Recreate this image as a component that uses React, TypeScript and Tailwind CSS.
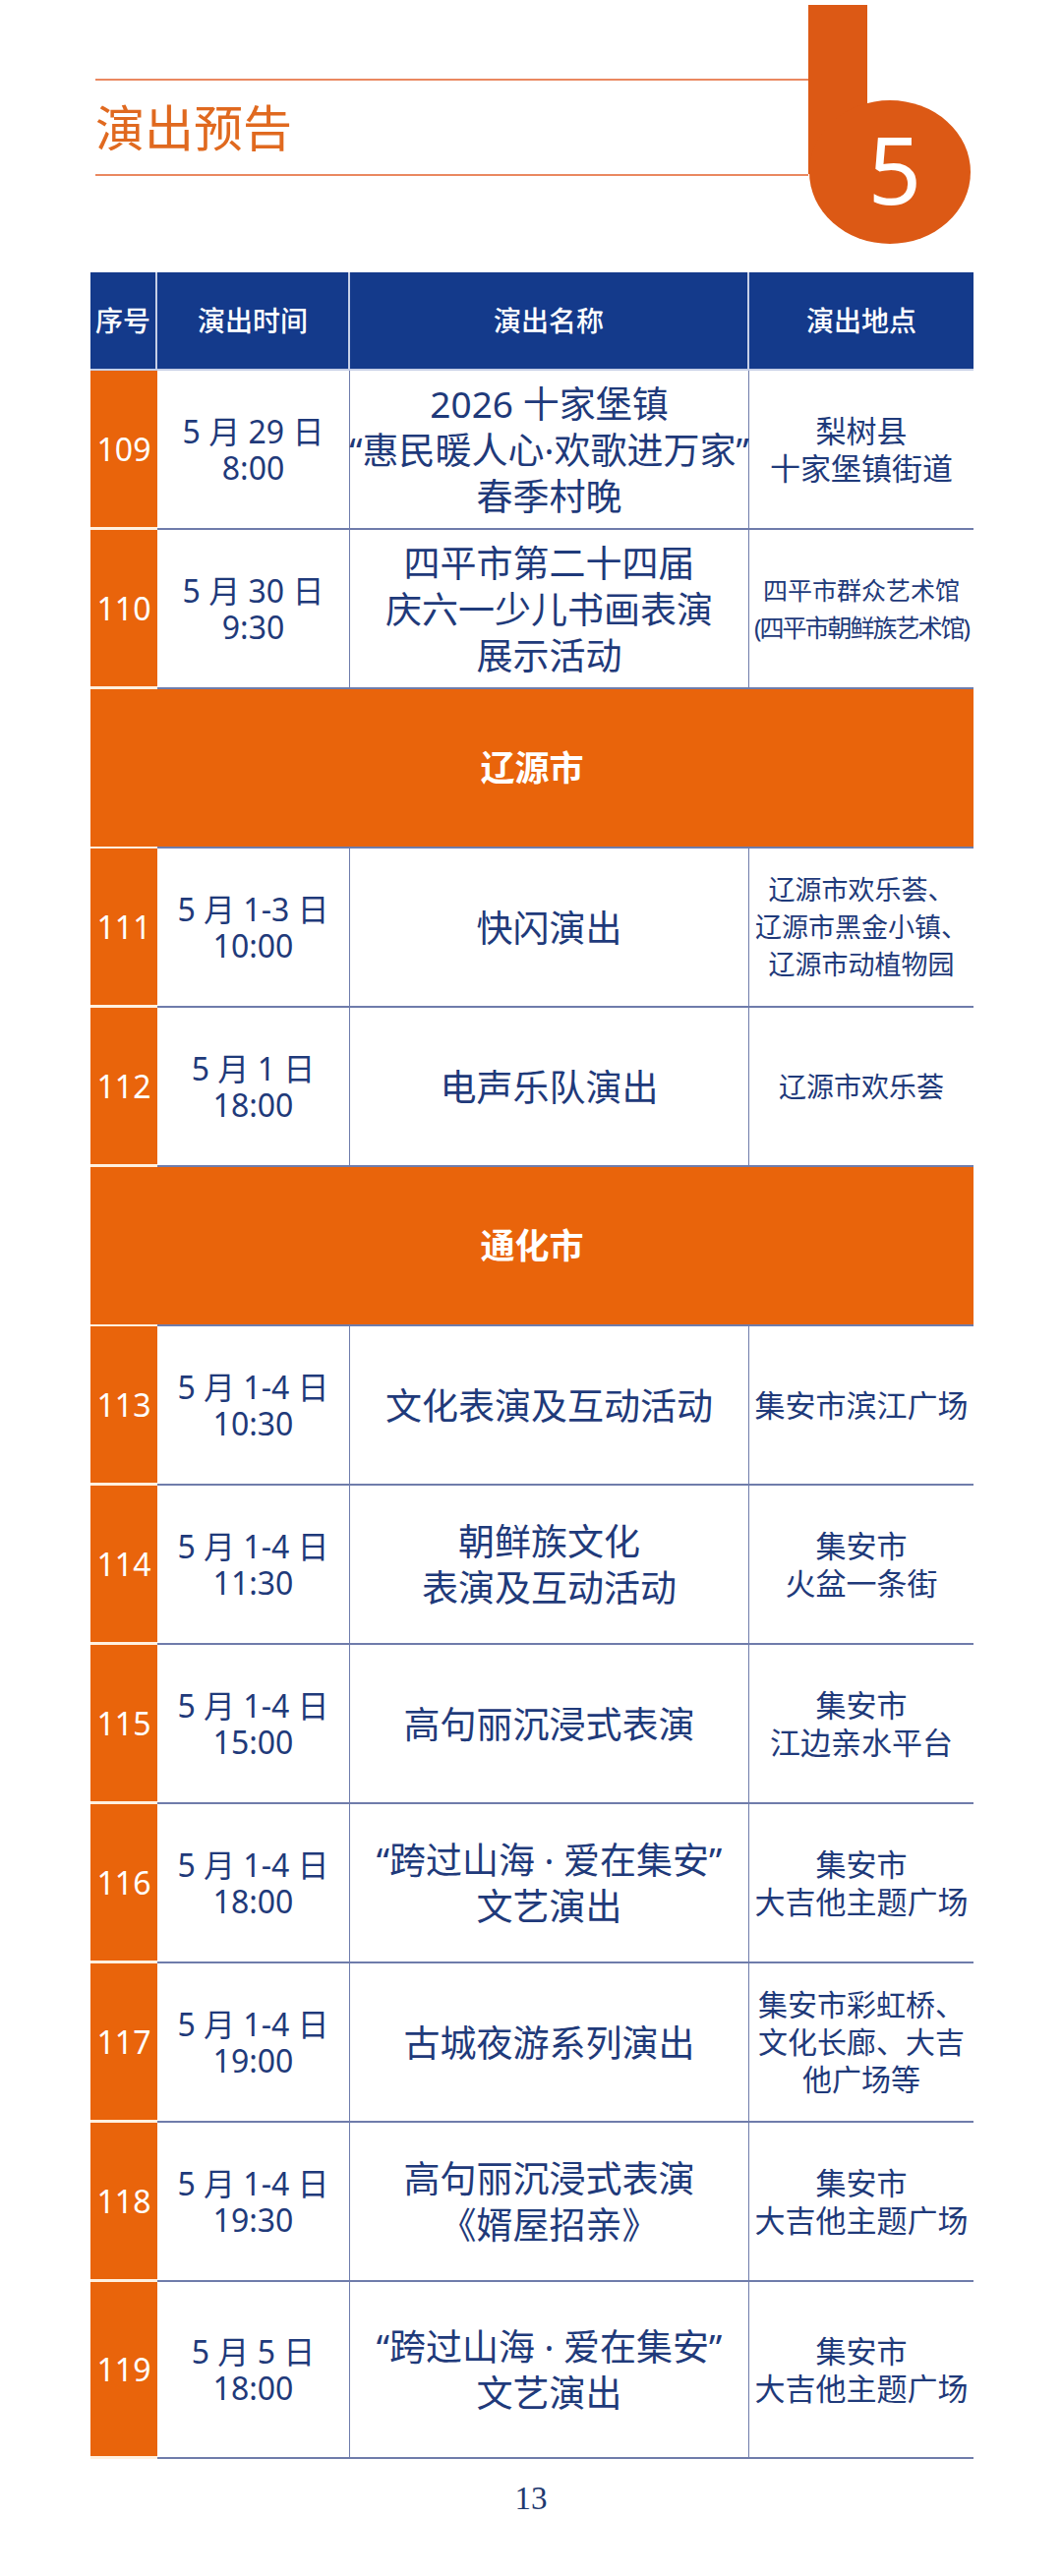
import React from "react";

type Line = string | { t: string; c: string };

type Show = {
  no: string;
  date: string;
  time: string;
  name: Line[];
  place: Line[];
  placeSize?: string;
  tall?: boolean;
};

type Block = { city: string } | Show;

const font = "font-['Noto_Sans','Noto_Sans_CJK_SC',sans-serif]";

const blocks: Block[] = [
  {
    no: "109",
    date: "5 月 29 日",
    time: "8:00",
    name: ["2026 十家堡镇", "“惠民暖人心·欢歌进万家”", "春季村晚"],
    place: ["梨树县", "十家堡镇街道"],
  },
  {
    no: "110",
    date: "5 月 30 日",
    time: "9:30",
    name: ["四平市第二十四届", "庆六一少儿书画表演", "展示活动"],
    place: ["四平市群众艺术馆", { t: "(四平市朝鲜族艺术馆)", c: "tracking-[-2px]" }],
    placeSize: "text-[25px]",
  },
  { city: "辽源市" },
  {
    no: "111",
    date: "5 月 1-3 日",
    time: "10:00",
    name: ["快闪演出"],
    place: ["辽源市欢乐荟、", "辽源市黑金小镇、", "辽源市动植物园"],
    placeSize: "text-[27px]",
  },
  {
    no: "112",
    date: "5 月 1 日",
    time: "18:00",
    name: ["电声乐队演出"],
    place: ["辽源市欢乐荟"],
    placeSize: "text-[28px]",
  },
  { city: "通化市" },
  {
    no: "113",
    date: "5 月 1-4 日",
    time: "10:30",
    name: ["文化表演及互动活动"],
    place: ["集安市滨江广场"],
  },
  {
    no: "114",
    date: "5 月 1-4 日",
    time: "11:30",
    name: ["朝鲜族文化", "表演及互动活动"],
    place: ["集安市", "火盆一条街"],
  },
  {
    no: "115",
    date: "5 月 1-4 日",
    time: "15:00",
    name: ["高句丽沉浸式表演"],
    place: ["集安市", "江边亲水平台"],
  },
  {
    no: "116",
    date: "5 月 1-4 日",
    time: "18:00",
    name: ["“跨过山海 · 爱在集安”", "文艺演出"],
    place: ["集安市", "大吉他主题广场"],
  },
  {
    no: "117",
    date: "5 月 1-4 日",
    time: "19:00",
    name: ["古城夜游系列演出"],
    place: ["集安市彩虹桥、", "文化长廊、大吉", "他广场等"],
    placeSize: "text-[30px]",
  },
  {
    no: "118",
    date: "5 月 1-4 日",
    time: "19:30",
    name: ["高句丽沉浸式表演", "《婿屋招亲》"],
    place: ["集安市", "大吉他主题广场"],
  },
  {
    no: "119",
    date: "5 月 5 日",
    time: "18:00",
    name: ["“跨过山海 · 爱在集安”", "文艺演出"],
    place: ["集安市", "大吉他主题广场"],
    tall: true,
  },
];

function Badge() {
  return (
    <svg width="172" height="245" viewBox="0 0 172 245" className="shrink-0">
      <rect x="0" y="0" width="60" height="172" fill="#dc5915" />
      <ellipse cx="83" cy="170" rx="82" ry="73" fill="#dc5915" />
      <text
        x="88"
        y="203"
        textAnchor="middle"
        fontSize="95"
        fill="#ffffff"
        fontFamily="'Noto Sans', sans-serif"
      >
        5
      </text>
    </svg>
  );
}

function Lines({ items }: { items: Line[] }) {
  return (
    <>
      {items.map((l, i) =>
        typeof l === "string" ? (
          <span key={i}>{l}</span>
        ) : (
          <span key={i} className={l.c}>
            {l.t}
          </span>
        )
      )}
    </>
  );
}

function Row({ s }: { s: Show }) {
  const h = s.tall ? "h-[180px]" : "h-[162px]";
  return (
    <div className={`flex ${h} text-[#1f3a7a]`}>
      <div className="w-[68px] shrink-0 bg-[#e9640b] border-b-[3px] border-[#fff0df] flex items-center justify-center text-white text-[32px]">
        {s.no}
      </div>
      <div className="w-[196px] shrink-0 border-b-2 border-r border-[#6f7cab] flex flex-col items-center justify-center text-[32px] leading-[37px] whitespace-nowrap">
        <span>{s.date}</span>
        <span>{s.time}</span>
      </div>
      <div className="w-[406px] shrink-0 border-b-2 border-r border-[#6f7cab] flex flex-col items-center justify-center text-[37px] leading-[47px] whitespace-nowrap">
        <Lines items={s.name} />
      </div>
      <div
        className={`w-[228px] shrink-0 border-b-2 border-[#6f7cab] flex flex-col items-center justify-center ${
          s.placeSize ?? "text-[31px]"
        } leading-[38px] whitespace-nowrap`}
      >
        <Lines items={s.place} />
      </div>
    </div>
  );
}

function CityRow({ city }: { city: string }) {
  return (
    <div className="flex flex-col h-[162px]">
      <div className="flex-1 bg-[#e9640b] flex items-center justify-center text-white text-[35px] font-bold">
        {city}
      </div>
      <div className="flex h-[2px]">
        <div className="w-[68px] bg-[#fff0df]" />
        <div className="flex-1 bg-[#6f7cab]" />
      </div>
    </div>
  );
}

export default function App() {
  const heads = [
    { t: "序号", w: "w-[68px]" },
    { t: "演出时间", w: "w-[196px]" },
    { t: "演出名称", w: "w-[406px]" },
    { t: "演出地点", w: "w-[228px]" },
  ];
  return (
    <div className={`w-[1080px] h-[2620px] bg-white pt-[5px] ${font}`}>
      <div className="flex items-start pl-[97px]">
        <div className="w-[725px] mt-[75px] h-[99px] border-t-2 border-b-2 border-[#ea8860] flex items-center">
          <h1 className="text-[50px] leading-none text-[#e0691f]">演出预告</h1>
        </div>
        <Badge />
      </div>

      <div className="ml-[92px] w-[898px] mt-[27px]">
        <div className="flex h-[100px] bg-[#143a8b] border-b-2 border-[#c6cfe6]">
          {heads.map((h, i) => (
            <div
              key={h.t}
              className={`${h.w} shrink-0 flex items-center justify-center text-white text-[28px] font-medium ${
                i < 3 ? "border-r-2 border-[#c6cfe6]" : ""
              }`}
            >
              {h.t}
            </div>
          ))}
        </div>
        {blocks.map((b, i) =>
          "city" in b ? <CityRow key={i} city={b.city} /> : <Row key={i} s={b} />
        )}
      </div>

      <div className="mt-[24px] text-center font-['Liberation_Serif',serif] text-[33px] leading-none text-[#1f3a70]">
        13
      </div>
    </div>
  );
}
